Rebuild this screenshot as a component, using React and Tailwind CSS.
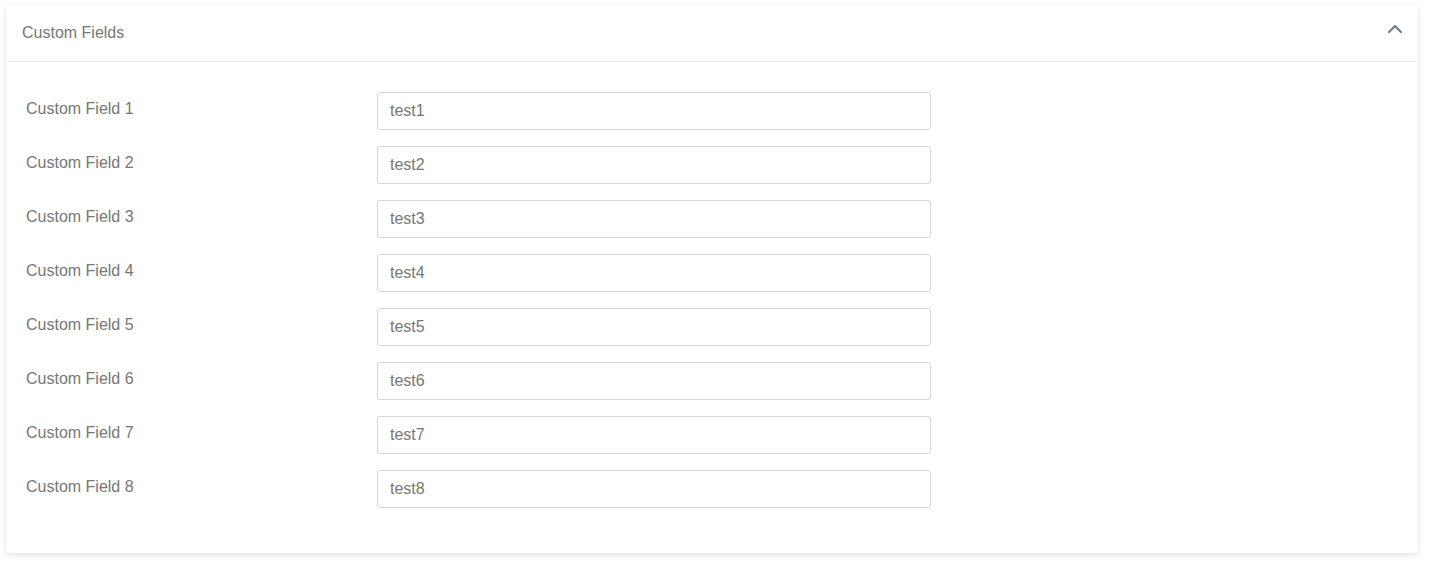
import React from 'react';

const fields = [1, 2, 3, 4, 5, 6, 7, 8].map((n) => ({
  label: `Custom Field ${n}`,
  value: `test${n}`,
}));

const ChevronUp = () => (
  <svg width="16" height="10" viewBox="0 0 16 10" fill="none" className="text-[#6f7d8c] mb-[8px]">
    <path d="M2 8 L8 2 L14 8" stroke="currentColor" strokeWidth="2.2" strokeLinecap="round" strokeLinejoin="round" />
  </svg>
);

export default function App() {
  return (
    <div className="min-h-[565px] bg-white pt-[5px] font-['Liberation_Sans',Arial,sans-serif]">
      <div className="ml-[6px] w-[1412px] h-[548px] bg-white shadow-[0_2px_6px_rgba(0,0,0,0.12)]">
        <div className="h-[57px] flex items-center justify-between pl-[16px] pr-[15px] border-b border-[#e6e6e6]">
          <span className="text-[16px] text-[#777777]">Custom Fields</span>
          <ChevronUp />
        </div>

        <div className="pt-[30px] pl-[20px] flex flex-col gap-[16px]">
          {fields.map((f) => (
            <div key={f.label} className="flex items-start">
              <label className="w-[351px] pt-[6px] leading-[22px] text-[16px] text-[#777777]">
                {f.label}
              </label>
              <input
                readOnly
                value={f.value}
                className="w-[554px] h-[38px] px-[12px] border border-[#d6d6d6] rounded-[3px] text-[16px] text-[#777777] outline-none"
              />
            </div>
          ))}
        </div>
      </div>
    </div>
  );
}
